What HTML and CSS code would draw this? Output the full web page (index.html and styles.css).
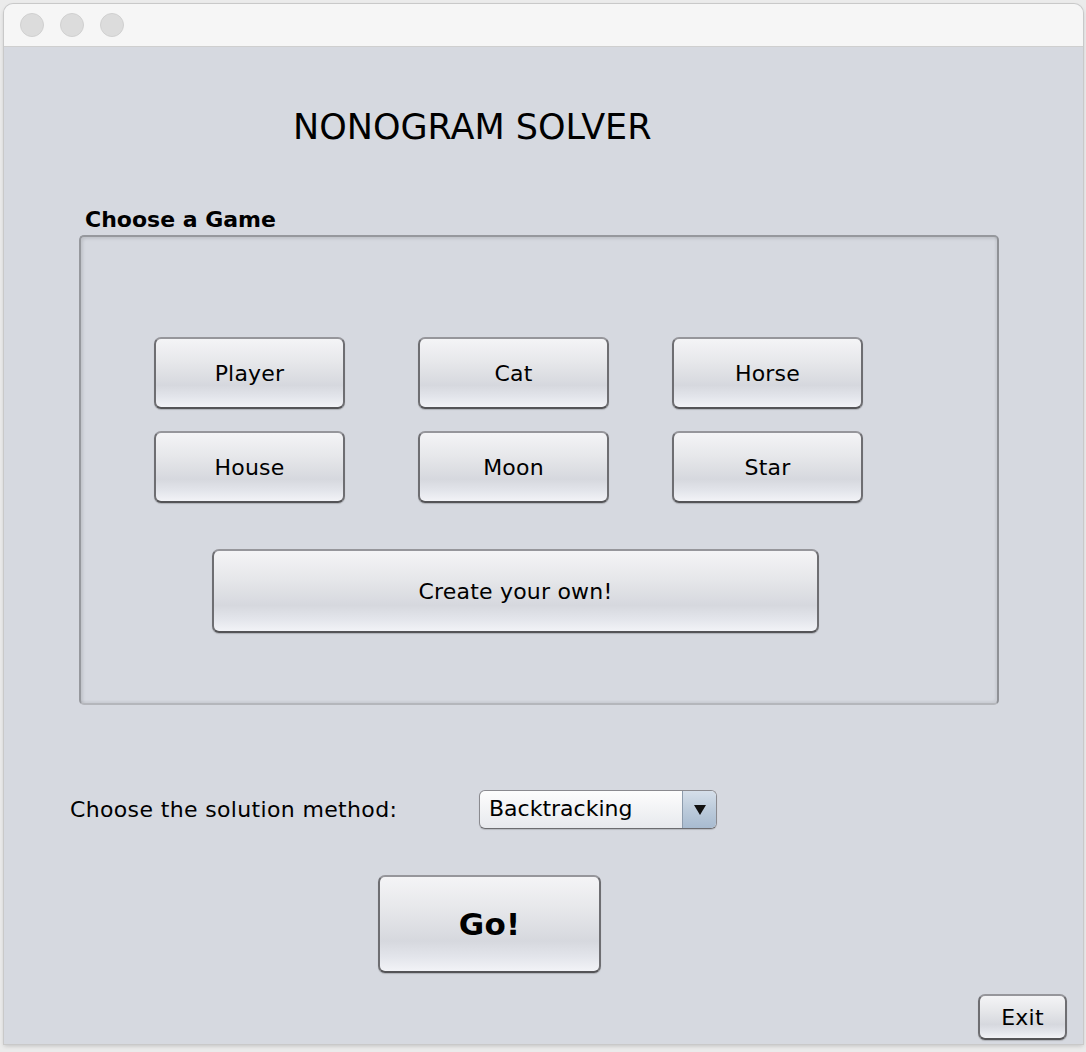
FILE: index.html
```html
<!DOCTYPE html>
<html>
<head>
<meta charset="utf-8">
<link rel="stylesheet" href="styles.css">
</head>
<body>
<div class="window">
  <div class="titlebar">
    <span class="light"></span><span class="light"></span><span class="light"></span>
  </div>
  <div class="content">
    <div class="title">NONOGRAM SOLVER</div>
    <div class="legend">Choose a Game</div>
    <div class="panel">
      <div class="row row1">
        <div class="btn game c1">Player</div>
        <div class="btn game c2">Cat</div>
        <div class="btn game c3">Horse</div>
      </div>
      <div class="row row2">
        <div class="btn game c1">House</div>
        <div class="btn game c2">Moon</div>
        <div class="btn game c3">Star</div>
      </div>
      <div class="btn create">Create your own!</div>
    </div>
    <div class="method">
      <div class="method-label">Choose the solution method:</div>
      <div class="combo">
        <div class="combo-text">Backtracking</div>
        <div class="combo-arrow"><span class="tri"></span></div>
      </div>
    </div>
    <div class="btn go">Go!</div>
    <div class="btn exit">Exit</div>
  </div>
</div>
</body>
</html>
```

FILE: styles.css
```css
html, body {
  margin: 0;
  padding: 0;
}
body {
  background: #ebebeb;
  width: 1086px;
  height: 1052px;
  overflow: hidden;
  font-family: "DejaVu Sans", "Liberation Sans", sans-serif;
  color: #000;
}
.window {
  margin: 4px 0 0 4px;
  width: 1079px;
  height: 1040px;
  border-radius: 9px 9px 0 0;
  background: #d6d9e0;
  box-shadow: 0 0 0 1px #c9c9c9, 0 2px 4px rgba(0,0,0,0.18);
  overflow: hidden;
}
.titlebar {
  height: 42px;
  background: #f6f6f6;
  border-bottom: 1px solid #cfcfcf;
  display: flex;
  align-items: center;
  padding-left: 16px;
  gap: 16px;
}
.light {
  width: 24px;
  height: 24px;
  border-radius: 50%;
  background: #dcdcdc;
  border: 1px solid #d0d0d0;
  box-sizing: border-box;
}
.content {
  height: 997px;
  display: flow-root;
}
.title {
  margin: 60px 0 0 289px;
  font-size: 35px;
  line-height: 40px;
  height: 40px;
  white-space: nowrap;
}
.legend {
  margin: 60px 0 0 81px;
  font-size: 22px;
  font-weight: bold;
  line-height: 26px;
  height: 26px;
}
.panel {
  margin: 2px 0 0 75px;
  width: 920px;
  height: 470px;
  box-sizing: border-box;
  border: 2px solid #96989d;
  border-bottom-color: #b4b6bb;
  border-right-color: #8f9196;
  border-radius: 5px;
  box-shadow: inset 2px 2px 3px rgba(0,0,0,0.10), inset -2px -2px 2px rgba(0,0,0,0.05);
  padding: 100px 0 0 73px;
}
.btn {
  box-sizing: border-box;
  border: 2px solid;
  border-color: #96969b #6e6e72 #545457 #6e6e72;
  border-radius: 7px;
  background: linear-gradient(to bottom, #f4f4f6 0%, #e6e7ea 35%, #d6d8de 68%, #e3e5eb 85%, #f2f3f7 100%);
  box-shadow: 0 1px 1px rgba(0,0,0,0.18);
  display: flex;
  align-items: center;
  justify-content: center;
  font-size: 22px;
  letter-spacing: 0.2px;
  white-space: nowrap;
}
.row {
  display: flex;
}
.row2 {
  margin-top: 22px;
}
.game {
  width: 191px;
  height: 72px;
}
.c2 { margin-left: 73px; }
.c3 { margin-left: 63px; }
.create {
  margin: 46px 0 0 58px;
  width: 607px;
  height: 84px;
}
.method {
  margin: 85px 0 0 66px;
  display: flex;
  align-items: center;
  height: 39px;
}
.method-label {
  width: 409px;
  font-size: 22px;
  line-height: 26px;
  letter-spacing: 0.35px;
  white-space: nowrap;
}
.combo {
  width: 238px;
  height: 39px;
  box-sizing: border-box;
  border: 1px solid #8a8a8f;
  border-bottom-color: #6c6c70;
  border-radius: 6px;
  background: linear-gradient(to bottom, #fdfdfd 0%, #f3f4f6 45%, #e7e9ed 100%);
  box-shadow: 0 1px 1px rgba(0,0,0,0.15);
  display: flex;
  overflow: hidden;
}
.combo-text {
  flex: 1;
  font-size: 22px;
  line-height: 36px;
  padding-left: 9px;
  padding-bottom: 1px;
}
.combo-arrow {
  width: 33px;
  border-left: 1px solid #8d9cad;
  background: linear-gradient(to bottom, #d5dfea 0%, #bccbdb 50%, #a8bbd0 100%);
  display: flex;
  align-items: center;
  justify-content: center;
}
.tri {
  width: 0;
  height: 0;
  border-left: 6px solid transparent;
  border-right: 6px solid transparent;
  border-top: 10px solid #111;
}
.go {
  margin: 46px 0 0 374px;
  width: 223px;
  height: 98px;
  font-size: 31px;
  font-weight: bold;
}
.exit {
  margin: 21px 0 0 974px;
  width: 89px;
  height: 46px;
}
```
